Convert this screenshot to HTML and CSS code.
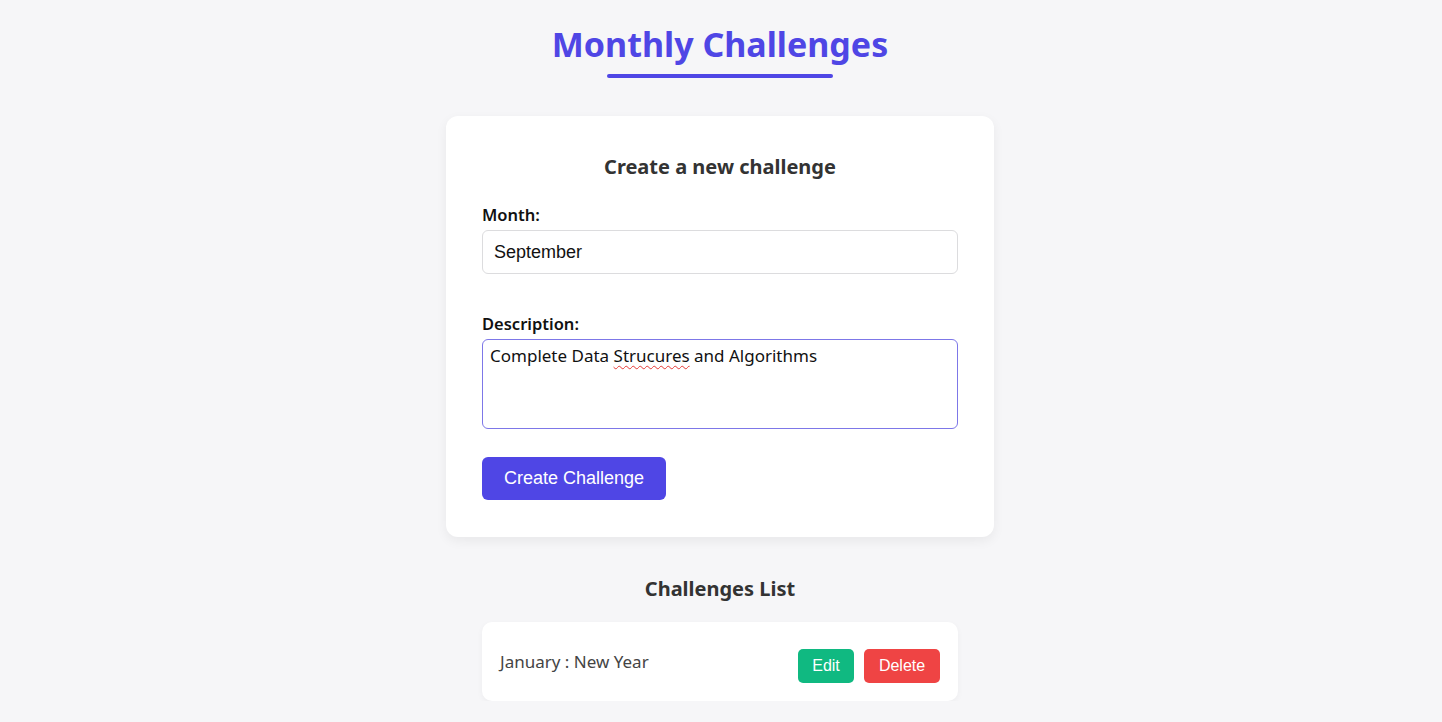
FILE: index.html
```html
<!DOCTYPE html>
<html lang="en">
<head>
<meta charset="utf-8">
<title>Monthly Challenges</title>
<link rel="stylesheet" href="styles.css">
</head>
<body>
<div class="app">
  <h1 class="title">Monthly Challenges</h1>
  <div class="card">
    <h2 class="card-title">Create a new challenge</h2>
    <div class="field">
      <label class="label" for="month">Month:</label>
      <input class="input" id="month" type="text" value="September">
    </div>
    <div class="field">
      <label class="label" for="desc">Description:</label>
      <div class="textarea"><span>Complete Data <span class="misspelled">Strucures</span> and Algorithms</span></div>
    </div>
    <button class="btn-primary">Create Challenge</button>
  </div>
  <h2 class="list-title">Challenges List</h2>
  <ul class="list">
    <li class="item">
      <span class="item-text">January : New Year</span>
      <div class="actions">
        <button class="btn btn-edit">Edit</button>
        <button class="btn btn-delete">Delete</button>
      </div>
    </li>
  </ul>
</div>
</body>
</html>
```
FILE: styles.css
```css
* { box-sizing: border-box; }
html, body { margin: 0; padding: 0; }
body {
  background: #f6f6f8;
  font-family: "Noto Sans", "Open Sans", sans-serif;
  color: #333;
}
.app {
  display: flex;
  flex-direction: column;
  align-items: center;
  padding-top: 20px;
  padding-right: 2px;
}
.title {
  margin: 0;
  font-size: 34px;
  font-weight: 700;
  color: #4f46e5;
  line-height: 48px;
  padding-bottom: 12px;
}
.title::after {
  content: "";
  display: block;
  width: 226px;
  height: 4px;
  border-radius: 2px;
  background: #4f46e5;
  margin: 6px auto 0;
}
.card {
  margin-top: 26px;
  width: 548px;
  background: #fff;
  border-radius: 12px;
  box-shadow: 0 4px 12px rgba(0,0,0,0.06);
  padding: 36px 36px 37px;
  display: flex;
  flex-direction: column;
}
.card-title {
  margin: 0 0 22px;
  text-align: center;
  font-size: 20px;
  font-weight: 700;
  line-height: 30px;
  color: #333;
}
.field {
  display: flex;
  flex-direction: column;
  margin-bottom: 39px;
}
.field + .field { margin-bottom: 28px; }
.label {
  font-size: 16.5px;
  font-weight: 600;
  color: #111;
  line-height: 22px;
  margin-bottom: 4px;
}
.input {
  height: 44px;
  border: 1px solid #dcdcde;
  border-radius: 6px;
  padding: 0 11px;
  font-family: "Liberation Sans", Arial, sans-serif;
  font-size: 18px;
  color: #111;
  background: #fff;
  outline: none;
}
.textarea {
  height: 90px;
  border: 1px solid #7d77e8;
  border-radius: 6px;
  padding: 4px 7px;
  font-size: 17px;
  line-height: 24px;
  color: #111;
  background: #fff;
}
.misspelled {
  text-decoration: underline wavy #e53935;
  text-decoration-thickness: 1px;
  text-underline-offset: 3px;
}
.btn-primary {
  align-self: flex-start;
  width: 184px;
  height: 43px;
  border: none;
  border-radius: 6px;
  background: #4f46e5;
  color: #fff;
  font-family: "Liberation Sans", Arial, sans-serif;
  font-size: 18px;
  cursor: pointer;
}
.list-title {
  margin: 38px 0 19px;
  font-size: 20px;
  font-weight: 700;
  line-height: 28px;
  color: #333;
}
.list {
  list-style: none;
  margin: 0;
  padding: 0;
  width: 476px;
}
.item {
  background: #fff;
  border-radius: 10px;
  box-shadow: 0 2px 6px rgba(0,0,0,0.04);
  height: 79px;
  padding: 0 18px;
  display: flex;
  align-items: center;
  justify-content: space-between;
}
.item-text {
  font-size: 17px;
  color: #444;
}
.actions {
  display: flex;
  gap: 10px;
  margin-top: 9px;
}
.btn {
  height: 34px;
  border: none;
  border-radius: 5px;
  color: #fff;
  font-family: "Liberation Sans", Arial, sans-serif;
  font-size: 16px;
  padding: 0 14px;
  cursor: pointer;
}
.btn-edit { background: #10b981; width: 56px; }
.btn-delete { background: #ef4444; width: 76px; }
```
